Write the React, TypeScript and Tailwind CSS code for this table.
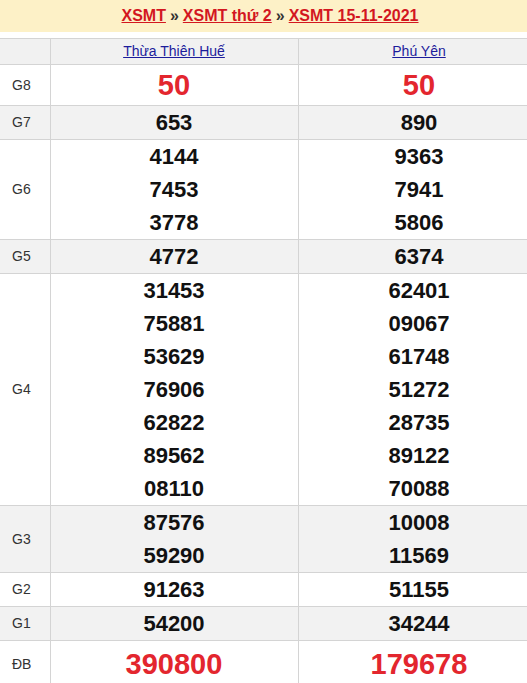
import React from "react";

type Row = {
  label: string;
  left: string[];
  right: string[];
  big?: boolean;
};

const rows: Row[] = [
  { label: "G8", left: ["50"], right: ["50"], big: true },
  { label: "G7", left: ["653"], right: ["890"] },
  { label: "G6", left: ["4144", "7453", "3778"], right: ["9363", "7941", "5806"] },
  { label: "G5", left: ["4772"], right: ["6374"] },
  {
    label: "G4",
    left: ["31453", "75881", "53629", "76906", "62822", "89562", "08110"],
    right: ["62401", "09067", "61748", "51272", "28735", "89122", "70088"],
  },
  { label: "G3", left: ["87576", "59290"], right: ["10008", "11569"] },
  { label: "G2", left: ["91263"], right: ["51155"] },
  { label: "G1", left: ["54200"], right: ["34244"] },
  { label: "ĐB", left: ["390800"], right: ["179678"], big: true },
];

const NumberCell = ({ values, big, tall }: { values: string[]; big?: boolean; tall?: boolean }) => (
  <td className="border border-[#d4d4d4] p-0 text-center align-middle">
    {values.map((v) => (
      <div
        key={v}
        className={
          big
            ? `text-[29px] font-bold text-[#e3262e] ${tall ? "leading-[46px]" : "leading-[40px]"}`
            : "text-[22px] leading-[33px] font-bold text-[#111]"
        }
      >
        {v}
      </div>
    ))}
  </td>
);

export default function App() {
  return (
    <div className="w-[527px] overflow-hidden bg-white font-['Liberation_Sans',Arial,sans-serif]">
      <div className="w-[540px]">
        <div className="h-8 bg-[#fdf1c7] flex items-center justify-center text-[16px] font-bold">
          <a className="text-[#d3171f] underline">XSMT</a>
          <span className="mx-[4px] text-[#333]">»</span>
          <a className="text-[#d3171f] underline">XSMT thứ 2</a>
          <span className="mx-[4px] text-[#333]">»</span>
          <a className="text-[#d3171f] underline">XSMT 15-11-2021</a>
        </div>
        <div className="h-[6px]" />
        <table className="w-full table-fixed border-collapse">
          <colgroup>
            <col className="w-[50px]" />
            <col className="w-[248px]" />
            <col className="w-[242px]" />
          </colgroup>
          <thead>
            <tr className="bg-[#f1f1f1] h-[26px]">
              <th className="border border-l-0 border-[#d4d4d4] p-0" />
              <th className="border border-[#d4d4d4] p-0 text-[14px] font-normal">
                <a className="text-[#1c1c9c] underline">Thừa Thiên Huế</a>
              </th>
              <th className="border border-[#d4d4d4] p-0 text-[14px] font-normal">
                <a className="text-[#1c1c9c] underline">Phú Yên</a>
              </th>
            </tr>
          </thead>
          <tbody>
            {rows.map((r, i) => (
              <tr key={r.label} className={i % 2 === 1 ? "bg-[#f2f2f2]" : "bg-white"}>
                <td className="border border-l-0 border-[#d4d4d4] p-0 pl-[12px] text-[14px] text-[#333] align-middle">
                  {r.label}
                </td>
                <NumberCell values={r.left} big={r.big} tall={r.label === "ĐB"} />
                <NumberCell values={r.right} big={r.big} tall={r.label === "ĐB"} />
              </tr>
            ))}
          </tbody>
        </table>
      </div>
    </div>
  );
}
